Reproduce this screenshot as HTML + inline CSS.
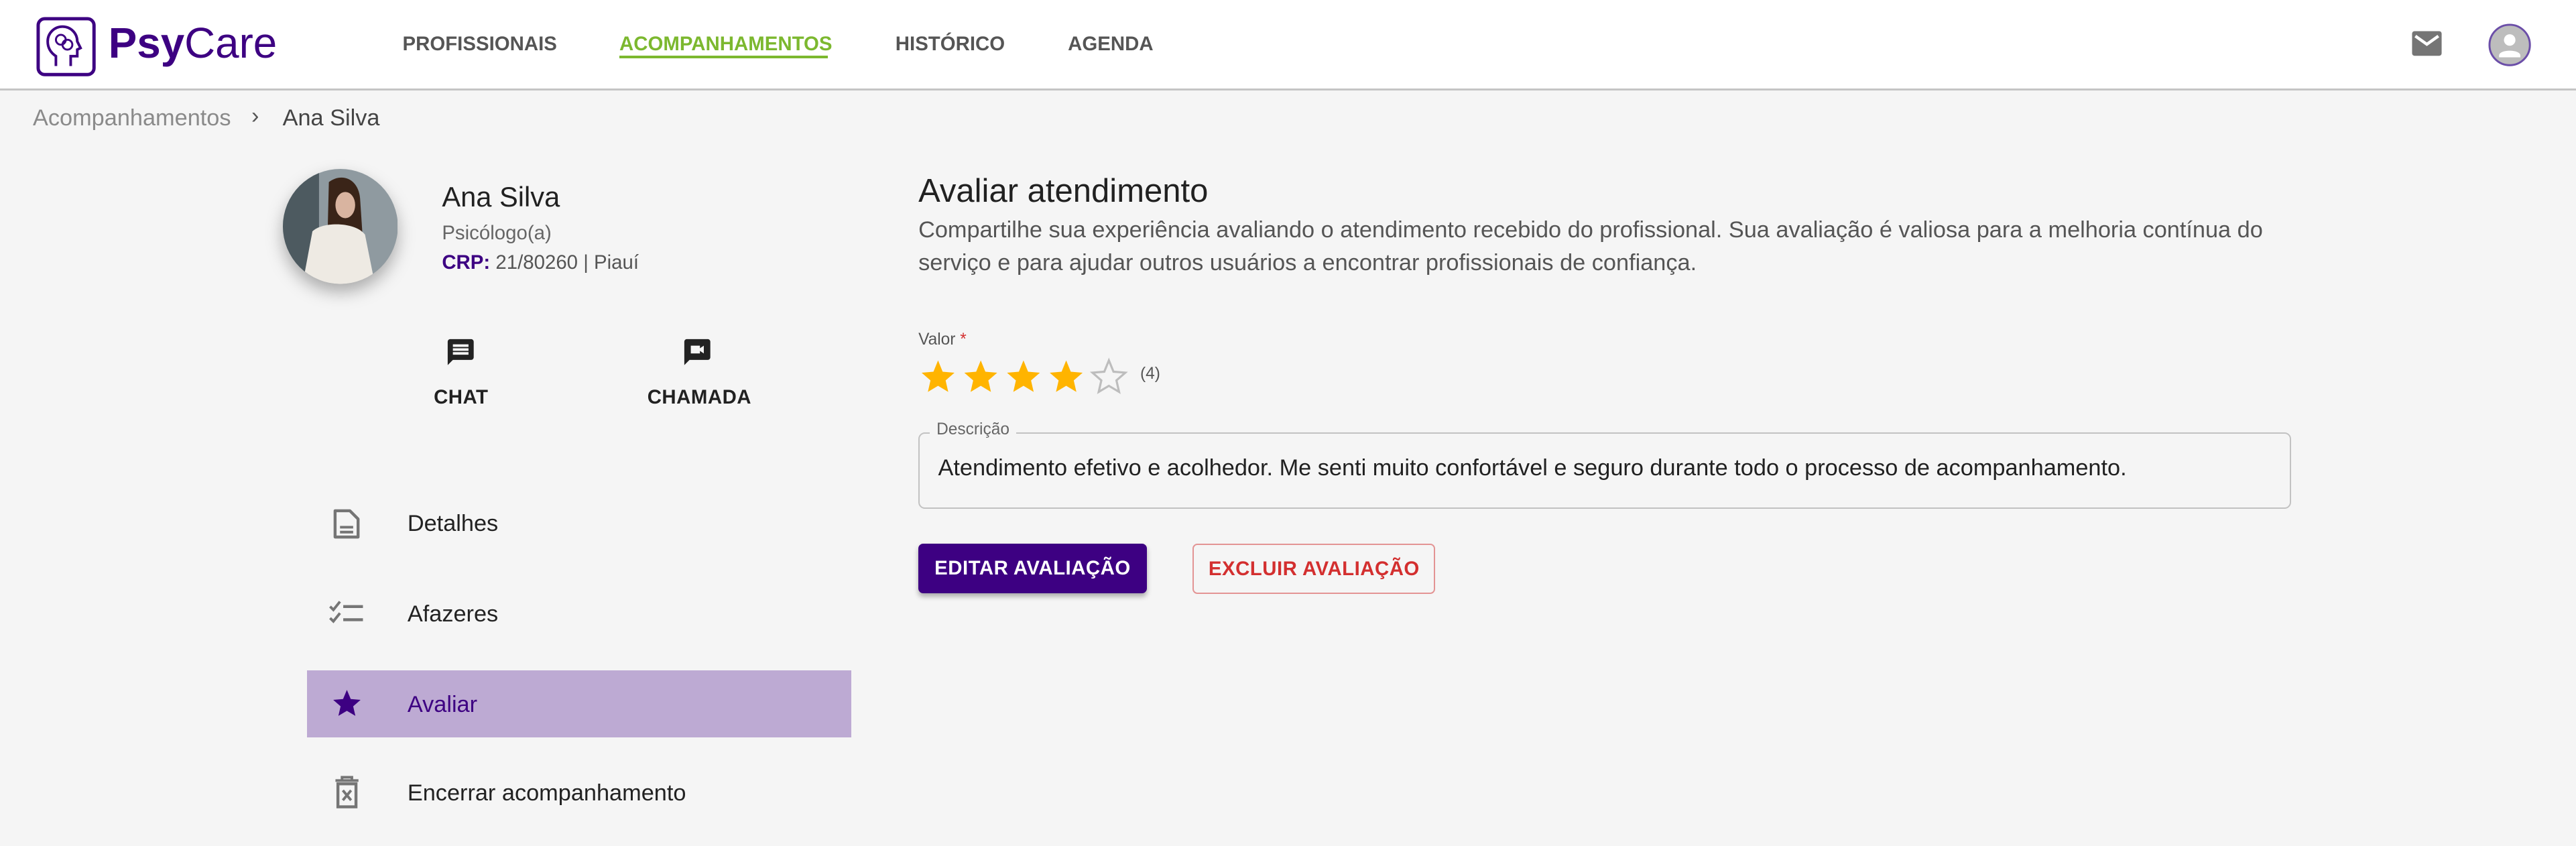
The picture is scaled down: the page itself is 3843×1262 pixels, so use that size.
<!DOCTYPE html>
<html><head><meta charset="utf-8"><style>
html{zoom:2.451}
body{margin:0;width:1568px;height:515px;background:#f5f5f5;font-family:"Liberation Sans",sans-serif;position:relative;overflow:hidden;color:#212121}
.a{position:absolute;white-space:nowrap}
.hdr{position:absolute;left:0;top:0;width:1568px;height:54px;background:#fff;border-bottom:1.5px solid #c4c4c4}
.nav{font-size:12px;font-weight:bold;color:#555;top:20px;letter-spacing:0}
.mi{font-size:14px;color:#222}
</style></head><body>
<div class="hdr"></div>
<svg class="a" style="left:22px;top:10px" width="37" height="37" viewBox="0 0 37 37"><rect x="1.2" y="1.2" width="34" height="34" rx="4" fill="none" stroke="#3d0082" stroke-width="2"/><path d="M12 30v-6c-3-2-5-5-5-9 0-5 4-9 9-9s9 4 9 9l2 4-2 1v4h-4v6" fill="none" stroke="#3d0082" stroke-width="1.6"/><circle cx="15" cy="14" r="3" fill="none" stroke="#3d0082" stroke-width="1.2"/><circle cx="19" cy="17" r="3" fill="none" stroke="#3d0082" stroke-width="1.2"/></svg>
<div class="a" style="left:66px;top:11px;font-size:26px;color:#3d0082"><b>Psy</b>Care</div>
<div class="a nav" style="left:245px">PROFISSIONAIS</div>
<div class="a nav" style="left:377px;color:#7cb82f">ACOMPANHAMENTOS</div>
<div class="a" style="left:377px;top:34px;width:127px;height:1.5px;background:#7cb82f"></div>
<div class="a nav" style="left:545px">HISTÓRICO</div>
<div class="a nav" style="left:650px">AGENDA</div>
<svg class="a" style="left:1467px;top:18px" width="20" height="18" viewBox="0 0 20 18"><rect x="1" y="1" width="18" height="15" rx="1.5" fill="#757575"/><path d="M3 4l7 5 7-5" fill="none" stroke="#fff" stroke-width="1.8"/></svg>
<svg class="a" style="left:1514px;top:14px" width="27" height="27" viewBox="0 0 27 27"><circle cx="13.5" cy="13.5" r="12.3" fill="#bdbdbd" stroke="#6b4ea8" stroke-width="1.2"/><circle cx="13.5" cy="10.5" r="3.5" fill="#fff"/><path d="M7 20c0-4 13-4 13 0v1H7z" fill="#fff"/></svg>

<div class="a" style="left:20px;top:64px;font-size:14px;color:#8a8a8a">Acompanhamentos</div>
<div class="a" style="left:153px;top:63px;font-size:14px;color:#555">›</div>
<div class="a" style="left:172px;top:64px;font-size:14px;color:#444">Ana Silva</div>

<svg class="a" style="left:172px;top:103px;filter:drop-shadow(0 5px 5px rgba(0,0,0,.3))" width="70" height="70" viewBox="0 0 70 70"><defs><clipPath id="c"><circle cx="35" cy="35" r="35"/></clipPath></defs><g clip-path="url(#c)"><rect width="70" height="70" fill="#8f9aa0"/><rect x="0" y="0" width="22" height="70" fill="#4d5a60"/><path d="M28 8c8-6 18-2 19 10l2 30-22 0z" fill="#3a2418"/><ellipse cx="38" cy="22" rx="6" ry="8" fill="#d9b4a0"/><path d="M12 70l6-32c6-6 26-6 32 2l6 30z" fill="#eeeae3"/></g></svg>
<div class="a" style="left:269px;top:110px;font-size:17px;font-weight:500">Ana Silva</div>
<div class="a" style="left:269px;top:135px;font-size:12px;color:#666">Psicólogo(a)</div>
<div class="a" style="left:269px;top:153px;font-size:12px;color:#555"><b style="color:#3d0082">CRP:</b> 21/80260 | Piauí</div>

<svg class="a" style="left:271px;top:205px" width="19" height="19" viewBox="0 0 24 24"><path d="M20 2H4c-1.1 0-2 .9-2 2v18l4-4h14c1.1 0 2-.9 2-2V4c0-1.1-.9-2-2-2zM18 14H6v-2h12v2zm0-3H6V9h12v2zm0-3H6V6h12v2z" fill="#222"/></svg>
<div class="a" style="left:264px;top:235px;font-size:12px;font-weight:bold;letter-spacing:.2px">CHAT</div>
<svg class="a" style="left:415px;top:205px" width="19" height="19" viewBox="0 0 24 24"><path d="M20 2H4c-1.1 0-2 .9-2 2v18l4-4h14c1.1 0 2-.9 2-2V4c0-1.1-.9-2-2-2zm-3 11l-3-2v2H7V7h7v2l3-2v6z" fill="#222"/></svg>
<div class="a" style="left:394px;top:235px;font-size:12px;font-weight:bold;letter-spacing:.2px">CHAMADA</div>

<svg class="a" style="left:202px;top:309px" width="18" height="20" viewBox="0 0 18 20"><path d="M2 2h9l5 5v11H2z" fill="none" stroke="#757575" stroke-width="1.8" stroke-linejoin="round"/><path d="M5 12h8M5 15h8" stroke="#757575" stroke-width="1.6"/></svg>
<div class="a mi" style="left:248px;top:311px">Detalhes</div>
<svg class="a" style="left:200px;top:365px" width="22" height="16" viewBox="0 0 22 16"><path d="M1 4l2 2 4-5M1 11l2 2 4-5" fill="none" stroke="#757575" stroke-width="1.6"/><path d="M9 4h12M9 12h12" stroke="#757575" stroke-width="1.8"/></svg>
<div class="a mi" style="left:248px;top:366px">Afazeres</div>
<div class="a" style="left:187px;top:408px;width:331px;height:41px;background:#bdaad3"></div>
<svg class="a" style="left:201px;top:418px" width="20" height="20" viewBox="0 0 24 24"><path d="M12 17.3l6.2 3.7-1.6-7 5.4-4.7-7.2-.6L12 2 9.2 8.7 2 9.3l5.4 4.7-1.6 7z" fill="#3d0082"/></svg>
<div class="a mi" style="left:248px;top:421px;color:#3d0082">Avaliar</div>
<svg class="a" style="left:203px;top:472px" width="16" height="20" viewBox="0 0 16 20"><path d="M1 3h14M5 3V1h6v2" stroke="#757575" stroke-width="1.6" fill="none"/><rect x="2.5" y="5" width="11" height="14" fill="none" stroke="#757575" stroke-width="1.8"/><path d="M5.5 9l5 6M10.5 9l-5 6" stroke="#757575" stroke-width="1.6"/></svg>
<div class="a mi" style="left:248px;top:475px">Encerrar acompanhamento</div>

<div class="a" style="left:559px;top:105px;font-size:20px">Avaliar atendimento</div>
<div class="a" style="left:559px;top:130px;font-size:14px;color:#555;line-height:20px;white-space:normal;width:840px">Compartilhe sua experiência avaliando o atendimento recebido do profissional. Sua avaliação é valiosa para a melhoria contínua do serviço e para ajudar outros usuários a encontrar profissionais de confiança.</div>
<div class="a" style="left:559px;top:201px;font-size:10px;color:#555">Valor <span style="color:#d32f2f">*</span></div>
<svg class="a" style="left:559px;top:216px" width="130" height="25" viewBox="0 0 130 25">
<g fill="#ffb400"><path id="s" d="M12 19l6.2 3.7-1.6-7 5.4-4.7-7.2-.6L12 3.5 9.2 10.4 2 11l5.4 4.7-1.6 7z"/><use href="#s" x="26"/><use href="#s" x="52"/><use href="#s" x="78"/></g>
<use href="#s" x="104" fill="none" stroke="#bdbdbd" stroke-width="1.3"/></svg>
<div class="a" style="left:694px;top:222px;font-size:10px;color:#555">(4)</div>
<div class="a" style="left:559px;top:263px;width:834px;height:45px;border:1px solid #c2c2c2;border-radius:4px"></div>
<div class="a" style="left:566px;top:256px;font-size:10px;color:#666;background:#f5f5f5;padding:0 4px">Descrição</div>
<div class="a" style="left:571px;top:277px;font-size:14px">Atendimento efetivo e acolhedor. Me senti muito confortável e seguro durante todo o processo de acompanhamento.</div>
<div class="a" style="left:559px;top:331px;width:139px;height:30px;background:#3d0082;border-radius:3px;box-shadow:0 2px 3px rgba(0,0,0,.3);color:#fff;font-size:12px;font-weight:bold;line-height:30px;text-align:center;letter-spacing:.2px">EDITAR AVALIAÇÃO</div>
<div class="a" style="left:726px;top:331px;width:146px;height:29px;border:1px solid #e39494;border-radius:3px;color:#d32f2f;font-size:12px;font-weight:bold;line-height:29px;text-align:center;letter-spacing:.2px">EXCLUIR AVALIAÇÃO</div>
</body></html>
